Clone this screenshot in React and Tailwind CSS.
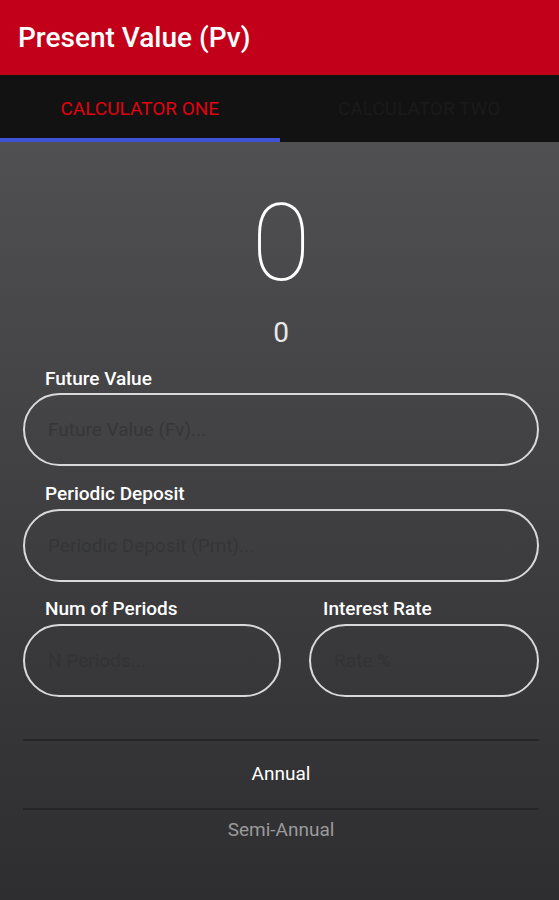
export default function App() {
    const font = { fontFamily: 'Roboto, "Noto Sans", sans-serif' };

    return (
        <div className="w-[559px] h-[900px] overflow-hidden flex flex-col" style={font}>
            {/* App Bar */}
            <header className="h-[75px] shrink-0 bg-[#c3001a] flex items-center px-[18px]">
                <h1 className="text-[28px] leading-none font-medium text-white">Present Value (Pv)</h1>
            </header>

            {/* Tabs */}
            <nav className="h-[67px] shrink-0 bg-[#121212] flex">
                <div className="flex-1 flex flex-col">
                    <div className="flex-1 flex items-center justify-center pt-[4px]">
                        <span className="text-[19px] leading-none text-[#e2000f]">CALCULATOR ONE</span>
                    </div>
                    <div className="h-[4px] bg-[#3d52d5]" />
                </div>
                <div className="flex-1 flex flex-col">
                    <div className="flex-1 flex items-center justify-center pt-[4px]">
                        <span className="text-[19px] leading-none text-[#1a1a1a]">CALCULATOR TWO</span>
                    </div>
                    <div className="h-[4px]" />
                </div>
            </nav>

            {/* Content */}
            <main className="flex-1 bg-linear-to-b from-[#505052] to-[#2e2e30] pl-[23px] pr-[20px] flex flex-col">
                <div className="mt-[47px] text-center text-[108px] leading-none font-thin text-white">0</div>
                <div className="mt-[22px] text-center text-[28px] leading-none text-[#e8e8e8]">0</div>

                <label className="mt-[22px] pl-[22px] h-[20px] text-[19px] leading-[20px] font-medium text-white">Future Value</label>
                <input
                    className="mt-[4px] h-[73px] w-full rounded-full border-2 border-[#d9d9d9] bg-transparent px-[23px] text-[19px] text-white placeholder:text-[#363638] outline-none"
                    placeholder="Future Value (Fv)..."
                />

                <label className="mt-[18px] pl-[22px] h-[20px] text-[19px] leading-[20px] font-medium text-white">Periodic Deposit</label>
                <input
                    className="mt-[5px] h-[73px] w-full rounded-full border-2 border-[#d9d9d9] bg-transparent px-[23px] text-[19px] text-white placeholder:text-[#353537] outline-none"
                    placeholder="Periodic Deposit (Pmt)..."
                />

                <div className="mt-[17px] flex gap-[28px]">
                    <div className="w-[258px] flex flex-col">
                        <label className="pl-[22px] h-[20px] text-[19px] leading-[20px] font-medium text-white">Num of Periods</label>
                        <input
                            className="mt-[5px] h-[73px] w-full rounded-full border-2 border-[#d9d9d9] bg-transparent px-[23px] text-[19px] text-white placeholder:text-[#333335] outline-none"
                            placeholder="N Periods..."
                        />
                    </div>
                    <div className="flex-1 flex flex-col">
                        <label className="pl-[14px] h-[20px] text-[19px] leading-[20px] font-medium text-white">Interest Rate</label>
                        <input
                            className="mt-[5px] h-[73px] w-full rounded-full border-2 border-[#d9d9d9] bg-transparent px-[23px] text-[19px] text-white placeholder:text-[#333335] outline-none"
                            placeholder="Rate %"
                        />
                    </div>
                </div>

                {/* Compounding picker */}
                <div className="mt-[42px] h-[2px] bg-[#262628]" />
                <div className="h-[67px] flex items-center justify-center text-[19px] text-white">Annual</div>
                <div className="h-[2px] bg-[#262628]" />
                <div className="pt-[10px] text-center text-[19px] leading-[20px] text-[#9a9a9c]">Semi-Annual</div>
            </main>
        </div>
    );
}
